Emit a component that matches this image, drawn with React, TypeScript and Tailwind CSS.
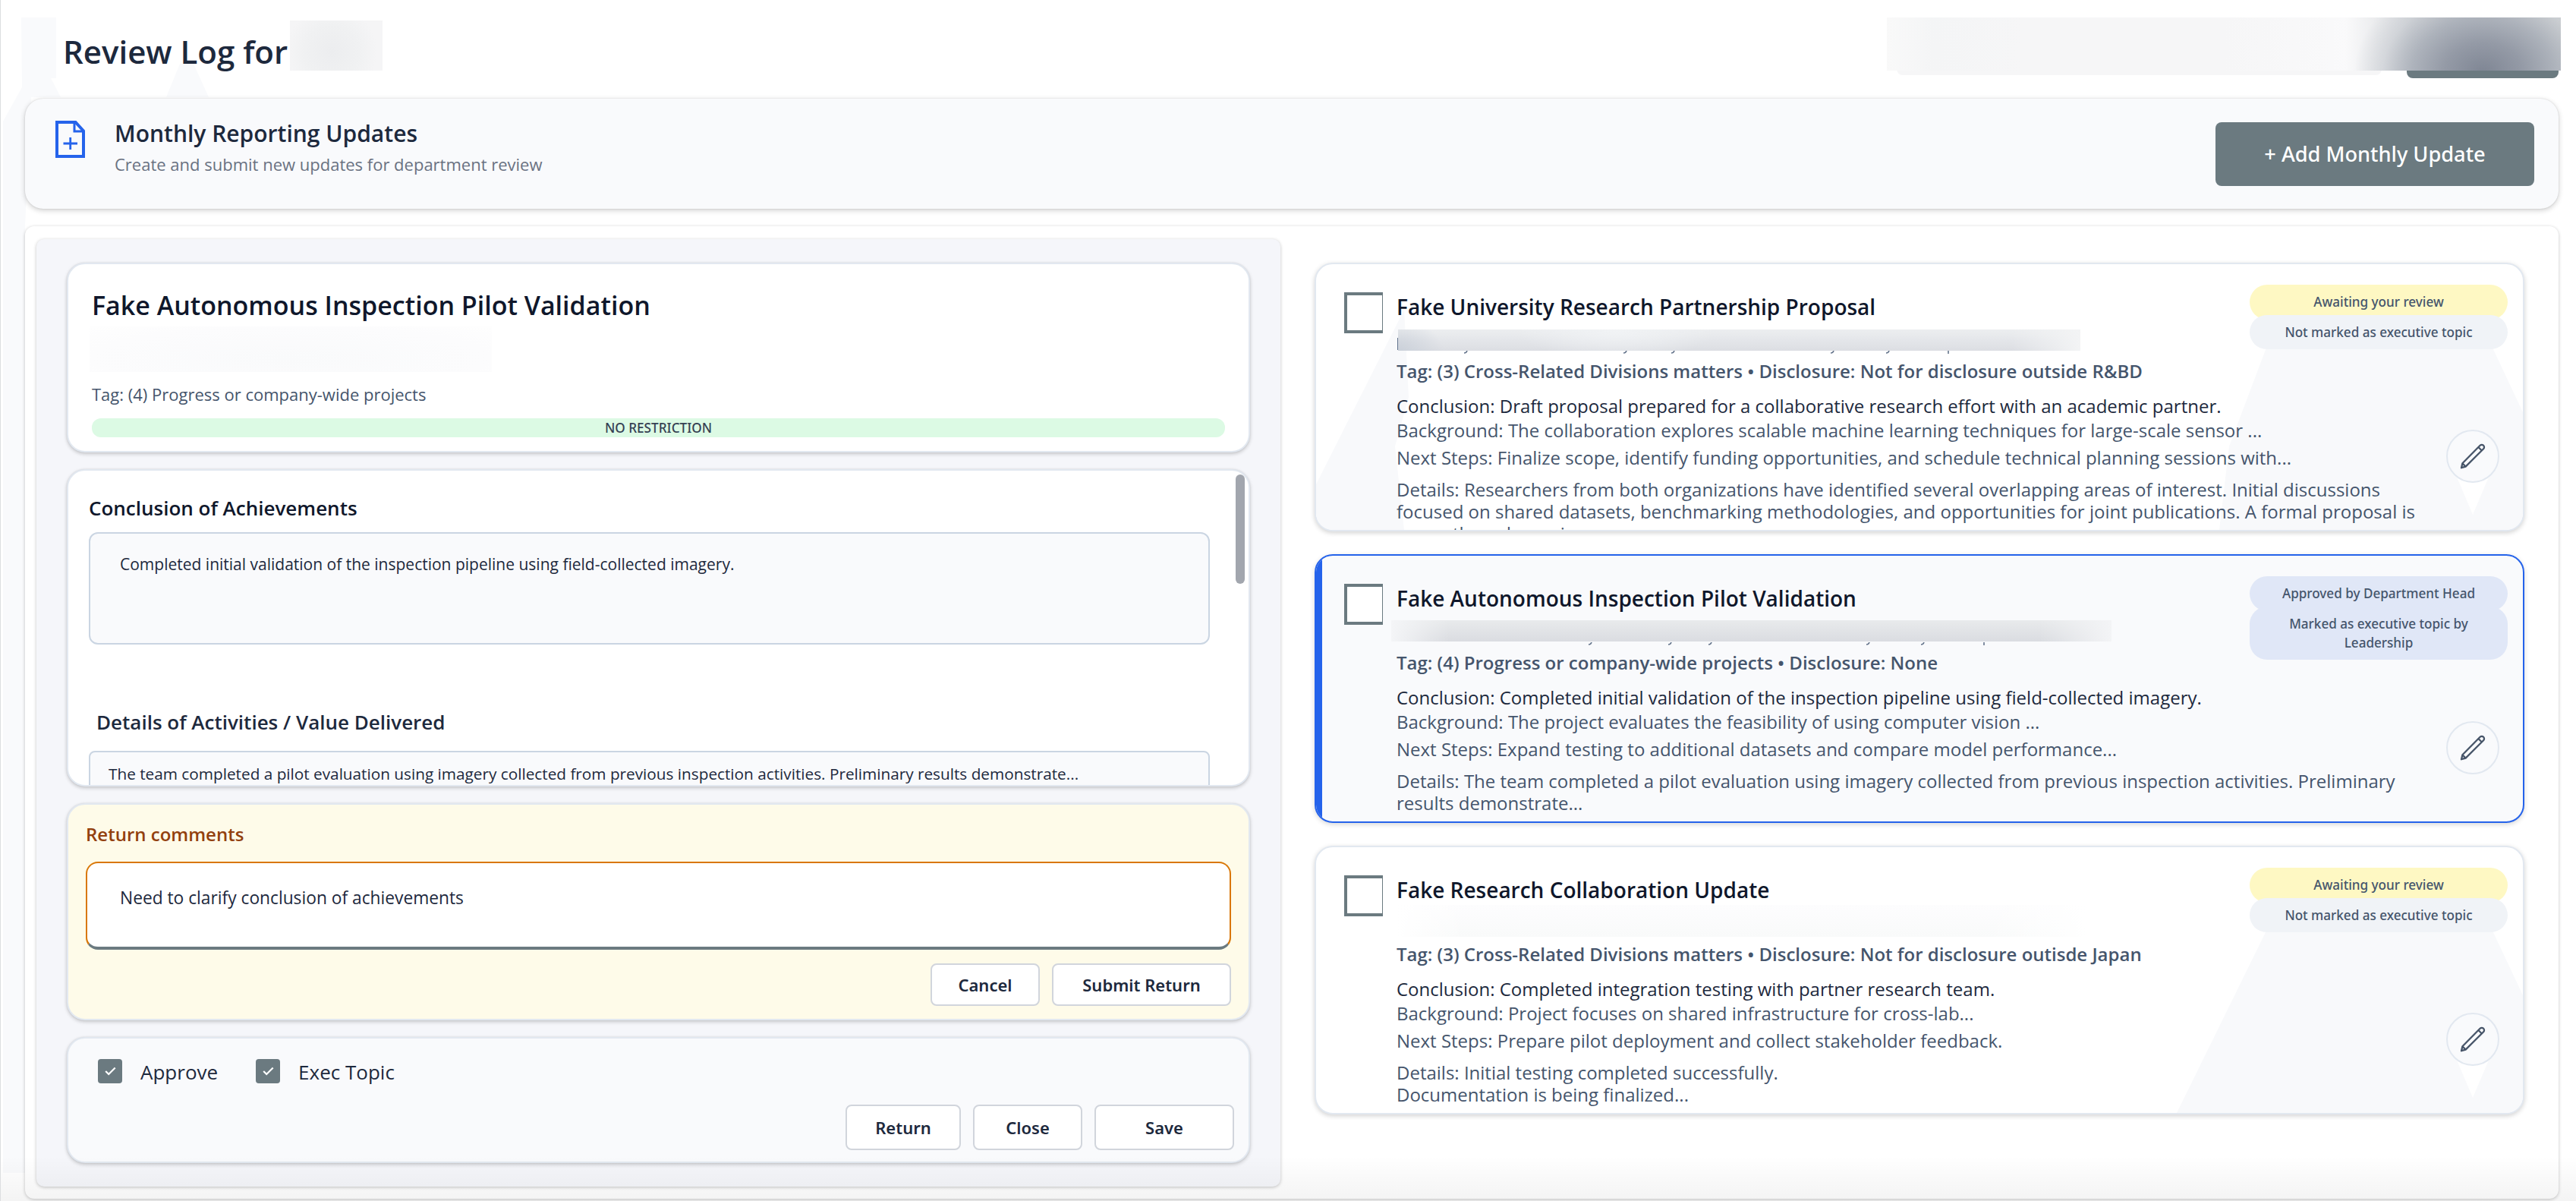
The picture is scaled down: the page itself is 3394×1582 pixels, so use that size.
import type { ReactNode } from "react";

type Tone = "yellow" | "gray" | "blue";

type Update = {
  title: string;
  tag: string;
  conclusion: string;
  background: string;
  next: string;
  details: string[];
  badges: { text: string; tone: Tone }[];
  selected?: boolean;
  redaction: ReactNode;
};

const toneClass: Record<Tone, string> = {
  yellow: "bg-[#fef8c3]",
  gray: "bg-[#f0f3f7]",
  blue: "bg-[#e0e7f7]",
};

const updates: Update[] = [
  {
    title: "Fake University Research Partnership Proposal",
    tag: "Tag: (3) Cross-Related Divisions matters • Disclosure: Not for disclosure outside R&BD",
    conclusion:
      "Conclusion: Draft proposal prepared for a collaborative research effort with an academic partner.",
    background:
      "Background: The collaboration explores scalable machine learning techniques for large-scale sensor ...",
    next: "Next Steps: Finalize scope, identify funding opportunities, and schedule technical planning sessions with...",
    details: [
      "Details: Researchers from both organizations have identified several overlapping areas of interest. Initial discussions",
      "focused on shared datasets, benchmarking methodologies, and opportunities for joint publications. A formal proposal is",
      "currently under review",
    ],
    badges: [
      { text: "Awaiting your review", tone: "yellow" },
      { text: "Not marked as executive topic", tone: "gray" },
    ],
    redaction: (
      <div className="relative ml-[2px] h-[49px]">
        <div className="absolute -left-px top-[21px] h-4 w-px bg-slate-500" />
        <div className="absolute left-0 top-[10px] h-[28px] w-[899px] bg-[radial-gradient(ellipse_60px_40px_at_0%_100%,#cbd1da,transparent),radial-gradient(ellipse_130px_40px_at_32%_0%,#f1f3f5,transparent),linear-gradient(to_right,transparent_90%,#f3f4f5),linear-gradient(to_bottom,#eceef0,#dcdee3)]" />
        <Descenders marks={[88, 298, 361, 571, 644, 725]} />
      </div>
    ),
  },
  {
    title: "Fake Autonomous Inspection Pilot Validation",
    tag: "Tag: (4) Progress or company-wide projects • Disclosure: None",
    conclusion:
      "Conclusion: Completed initial validation of the inspection pipeline using field-collected imagery.",
    background: "Background: The project evaluates the feasibility of using computer vision ...",
    next: "Next Steps: Expand testing to additional datasets and compare model performance...",
    details: [
      "Details: The team completed a pilot evaluation using imagery collected from previous inspection activities. Preliminary",
      "results demonstrate...",
    ],
    badges: [
      { text: "Approved by Department Head", tone: "blue" },
      { text: "Marked as executive topic by Leadership", tone: "blue" },
    ],
    selected: true,
    redaction: (
      <div className="relative ml-[2px] h-[49px]">
        <div className="absolute -left-[9px] top-[9px] h-[28px] w-[949px] bg-[linear-gradient(to_right,#f4f5f7,transparent_8%,transparent_90%,#f3f4f6),linear-gradient(to_bottom,#e8eaec,#dadce1)]" />
        <Descenders marks={[252, 357, 410, 618, 690, 772]} />
      </div>
    ),
  },
  {
    title: "Fake Research Collaboration Update",
    tag: "Tag: (3) Cross-Related Divisions matters • Disclosure: Not for disclosure outisde Japan",
    conclusion: "Conclusion: Completed integration testing with partner research team.",
    background: "Background: Project focuses on shared infrastructure for cross-lab...",
    next: "Next Steps: Prepare pilot deployment and collect stakeholder feedback.",
    details: ["Details: Initial testing completed successfully.", "Documentation is being finalized..."],
    badges: [
      { text: "Awaiting your review", tone: "yellow" },
      { text: "Not marked as executive topic", tone: "gray" },
    ],
    redaction: (
      <div className="h-[49px]">
        <div className="h-[42px] w-[912px] bg-[linear-gradient(to_right,white,transparent_10%,transparent_85%,white),linear-gradient(to_bottom,#fdfdfe,#f9fafa)]" />
      </div>
    ),
  },
];

/** Tails of the redacted line that stick out below its cover. */
function Descenders({ marks }: { marks: number[] }) {
  return (
    <svg className="absolute left-0 top-[38px]" width="900" height="5" viewBox="0 0 900 5">
      {marks.map((x, i) => (
        <path
          key={x}
          d={i === marks.length - 1 ? `M${x} 0V4` : `M${x + 3} 0Q${x + 2} 3 ${x - 1} 3`}
          stroke="#64748b"
          strokeWidth="1.6"
          fill="none"
        />
      ))}
    </svg>
  );
}

function FileAddIcon() {
  return (
    <svg className="shrink-0" width="39" height="49" viewBox="0 0 39 49" fill="none" stroke="#2563eb">
      <path d="M2 2H26.5L37 13.5V47H2Z" strokeWidth="4" />
      <path d="M25 2V14H37" strokeWidth="3" />
      <path d="M19.7 22V38M10.5 30H29" strokeWidth="2.8" />
    </svg>
  );
}

function PencilIcon() {
  return (
    <svg width="34" height="34" viewBox="0 0 34 34" fill="none" stroke="#475569" strokeWidth="2.3" strokeLinejoin="round">
      <path d="M26.6 2.8a3.1 3.1 0 0 1 4.5 4.5L7.6 30.6L2 32.2L3.4 26.2Z" />
      <path d="M24.4 5L28.9 9.5M3.4 26.2L7.6 30.6" />
    </svg>
  );
}

function CheckedBox({ label }: { label: string }) {
  return (
    <label className="flex h-8 items-center gap-6">
      <span className="flex size-8 items-center justify-center rounded-[4px] bg-[#6b7a80]">
        <svg width="15" height="12" viewBox="0 0 15 12" fill="none" stroke="white" strokeWidth="2.2">
          <path d="M1.2 6L5.2 10L13.7 1.5" />
        </svg>
      </span>
      <span className="translate-y-px text-[26px] leading-8 text-slate-800">{label}</span>
    </label>
  );
}

function Button({ className, children }: { className: string; children: ReactNode }) {
  return (
    <button
      className={`flex items-center justify-center rounded-lg border-2 border-gray-300 bg-white font-['Noto_Sans',sans-serif] text-[22px] font-semibold text-slate-800 ${className}`}
    >
      {children}
    </button>
  );
}

function Panel({ className, children }: { className: string; children: ReactNode }) {
  return (
    <section
      className={`overflow-hidden rounded-[24px] border-2 border-slate-200 shadow-[0_2px_5px_rgba(0,0,0,0.2),0_0_2px_rgba(0,0,0,0.1)] ${className}`}
    >
      {children}
    </section>
  );
}

/** Faint facets behind a card's content. */
function Facets({ full }: { full: boolean }) {
  return (
    <svg className="absolute inset-0" width="1590" height="350" viewBox="0 0 1590 350" fill="#f8f9fb">
      {full && <path d="M116 60L0 290V350H116L104 240L122 175Z" />}
      <path d={full ? "M1252 110H1550L1590 195V350H1190L1203 240Z" : "M1252 110H1550L1590 195V350H1134Z"} />
      <path d="M1490 250H1558L1524 330Z" fill="#ffffff" />
    </svg>
  );
}

function UpdateCard({ u, full }: { u: Update; full: boolean }) {
  return (
    <article
      className={
        u.selected
          ? "relative h-[354px] overflow-hidden rounded-[24px] border-2 border-[#2563eb] bg-[#f9fafc] shadow-[0_2px_6px_rgba(0,0,0,0.16)]"
          : "relative h-[354px] overflow-hidden rounded-[24px] border-2 border-slate-200 bg-white shadow-[0_2px_6px_rgba(0,0,0,0.18)]"
      }
    >
      {u.selected ? <div className="absolute inset-y-0 left-0 w-2 bg-[#2563eb]" /> : <Facets full={full} />}
      <div className="relative flex pl-[37px]">
        <div className="mt-[37px] h-[54px] w-[51px] shrink-0 overflow-hidden">
          <div className="size-[54px] border-4 border-[#6b7a80] bg-white" />
        </div>
        <div className="ml-[18px] w-[1364px] shrink-0 whitespace-nowrap pt-9 text-2xl leading-8 text-slate-600">
          <h3 className="text-[28px] font-semibold leading-10 text-slate-900">{u.title}</h3>
          {u.redaction}
          <p className="font-semibold">{u.tag}</p>
          <p className="mt-[14px] text-slate-800">{u.conclusion}</p>
          <p>{u.background}</p>
          <p className="mt-1">{u.next}</p>
          <div className="mt-[11px] leading-[29px]">
            {u.details.map((line) => (
              <p key={line}>{line}</p>
            ))}
          </div>
        </div>
      </div>
      <div className="absolute right-5 top-[27px] w-[340px] text-center font-['Noto_Sans',sans-serif] text-[17.1px] font-medium leading-[25px] text-slate-600">
        {u.badges.map((b, i) => (
          <div
            key={b.text}
            className={`rounded-[23px] px-10 py-[10px] ${i > 0 ? "relative -mt-[6px]" : "pb-[11px]"} ${toneClass[b.tone]}`}
          >
            {b.text}
          </div>
        ))}
      </div>
      <button className="absolute bottom-[62px] right-[31px] flex size-[70px] items-center justify-center rounded-full border-2 border-slate-200 bg-[#f9fafc]">
        <PencilIcon />
      </button>
    </article>
  );
}

export default function App() {
  return (
    <div className="relative h-[1582px] w-[3394px] overflow-hidden border-l border-[#dcdee0] bg-white pl-8 pr-[23px] font-['Open_Sans',sans-serif]">
      <svg className="absolute left-0 top-0" width="290" height="1582" viewBox="0 0 290 1582" fill="#f9fafc">
        <path d="M27 23H73V103H66L79 128H40L32 298V1545H3V160L28 115Z" />
        <path d="M236 84H254L274 128H218Z" />
      </svg>

      <header className="relative flex h-[130px] justify-between">
        <div className="flex pl-[50px] pt-10">
          <h1 className="text-[42px] font-semibold leading-[56px] text-slate-800">Review Log for</h1>
          <div className="-mt-[13px] ml-[3px] h-[66px] w-[122px] bg-[radial-gradient(ellipse_60px_60px_at_45%_62%,#ecedef,#f0f1f2_60%,#f5f5f6)]" />
        </div>
        <div className="relative -mr-[3px] mt-[23px] h-[80px] w-[888px]">
          <div className="absolute left-[13px] top-[60px] h-[16px] w-[639px] rounded-b-lg bg-[#f6f6f7]" />
          <div className="absolute bottom-0 right-[3px] h-5 w-[200px] rounded-b-lg bg-[#6b7a80]" />
          <div className="absolute inset-x-0 top-0 h-[70px] bg-[radial-gradient(ellipse_170px_130px_at_786px_72px,#7f8694,#949aa6_30%,rgba(166,172,182,0.85)_55%,rgba(190,195,202,0.45)_78%,rgba(215,218,222,0)),linear-gradient(to_right,#f9f9f9,#f4f5f6_7%,#f6f6f7_20%,#f6f6f7_50%,#f9f9fa_66%,#fafafb_68%,#d9dbde_78%,#cfd1d4_84%,#d4d6d7)]" />
        </div>
      </header>

      <section className="relative flex h-[145px] items-start rounded-[24px] bg-[#f9fafc] pl-10 pr-8 shadow-[0_2px_7px_rgba(0,0,0,0.2),0_0_2px_rgba(0,0,0,0.12)]">
        <div className="pt-[29px]">
          <FileAddIcon />
        </div>
        <div className="ml-[39px] grow pt-[27px]">
          <h2 className="text-[30px] font-semibold leading-[38px] text-slate-800">Monthly Reporting Updates</h2>
          <p className="mt-[6px] text-[22px] leading-[30px] text-gray-500">
            Create and submit new updates for department review
          </p>
        </div>
        <button className="mt-[31px] h-[84px] w-[420px] rounded-lg bg-[#6b7a80] font-['Noto_Sans',sans-serif] text-[27.2px] font-medium text-white">
          + Add Monthly Update
        </button>
      </section>

      <main className="relative mt-[23px] flex h-[1281px] items-start rounded-xl bg-white pl-[15px] pt-[17px] shadow-[0_1px_4px_rgba(0,0,0,0.24)]">
        <div className="flex h-[1248px] w-[1639px] shrink-0 flex-col gap-[22px] rounded-[10px] bg-[#f5f6fa] px-10 pt-[31px] shadow-[0_1px_4px_rgba(0,0,0,0.24)]">
          <Panel className="h-[250px] bg-white pl-[31px] pr-[31px] pt-[31px]">
            <h2 className="text-[34px] font-semibold leading-[46px] text-slate-900">
              Fake Autonomous Inspection Pilot Validation
            </h2>
            <div className="-ml-[3px] mt-[5px] h-[60px] w-[530px] bg-[radial-gradient(ellipse_at_50%_70%,#f9fafb,#fcfcfd_70%,#fefefe)]" />
            <p className="mt-[14px] text-[22px] leading-[30px] text-slate-600">
              Tag: (4) Progress or company-wide projects
            </p>
            <div className="mt-[17px] h-[25px] rounded-xl bg-[#dcfae4] text-center font-['Noto_Sans',sans-serif] text-[17.2px] font-medium leading-[25px] text-gray-700">
              NO RESTRICTION
            </div>
          </Panel>

          <Panel className="relative h-[418px] bg-white pl-[27px] pt-[31px]">
            <h3 className="text-[26px] font-semibold leading-9 text-slate-900">Conclusion of Achievements</h3>
            <div className="mt-[14px] h-[148px] w-[1477px] rounded-xl border-2 border-slate-300 bg-[#f9fafc] pl-[39px] pt-[25px] text-[21px] leading-[30px] text-slate-800">
              Completed initial validation of the inspection pipeline using field-collected imagery.
            </div>
            <h3 className="ml-[10px] mt-[84px] text-[26px] font-semibold leading-9 text-slate-800">
              Details of Activities / Value Delivered
            </h3>
            <div className="mt-5 h-[120px] w-[1477px] rounded-lg border-2 border-slate-300 bg-[#f9fafc] pl-6 pt-[13px] text-[20.75px] leading-[30px] text-slate-800">
              The team completed a pilot evaluation using imagery collected from previous inspection activities.
              Preliminary results demonstrate...
            </div>
            <div className="absolute right-[5px] top-[5px] h-[144px] w-3 rounded-full bg-[#a2a6ae]" />
          </Panel>

          <Panel className="h-[286px] bg-[#fefbe9] px-[23px] pt-[23px]">
            <h3 className="text-2xl font-semibold leading-8 text-[#92400e]">Return comments</h3>
            <div className="mt-5 h-[116px] rounded-2xl border-2 border-b-4 border-[#d97706] border-b-[#6b7a80] bg-white pl-[43px] pt-[31px] text-[22.75px] leading-[30px] text-slate-800">
              Need to clarify conclusion of achievements
            </div>
            <div className="mt-[18px] flex justify-end gap-4">
              <Button className="h-14 w-[144px]">Cancel</Button>
              <Button className="h-14 w-[236px]">Submit Return</Button>
            </div>
          </Panel>

          <Panel className="h-[166px] bg-[#f9fafc] pl-[39px] pr-[19px] pt-[27px]">
            <div className="flex gap-[50px]">
              <CheckedBox label="Approve" />
              <CheckedBox label="Exec Topic" />
            </div>
            <div className="mt-7 flex justify-end gap-4">
              <Button className="h-[60px] w-[152px]">Return</Button>
              <Button className="h-[60px] w-[144px]">Close</Button>
              <Button className="h-[60px] w-[184px]">Save</Button>
            </div>
          </Panel>
        </div>

        <div className="ml-[45px] mt-[31px] flex w-[1594px] flex-col gap-[30px]">
          {updates.map((u, i) => (
            <UpdateCard key={u.title} u={u} full={i === 0} />
          ))}
        </div>
      </main>

      <div className="pointer-events-none absolute inset-x-0 bottom-0 h-[60px] bg-linear-to-b from-transparent to-black/[0.045]" />
    </div>
  );
}
